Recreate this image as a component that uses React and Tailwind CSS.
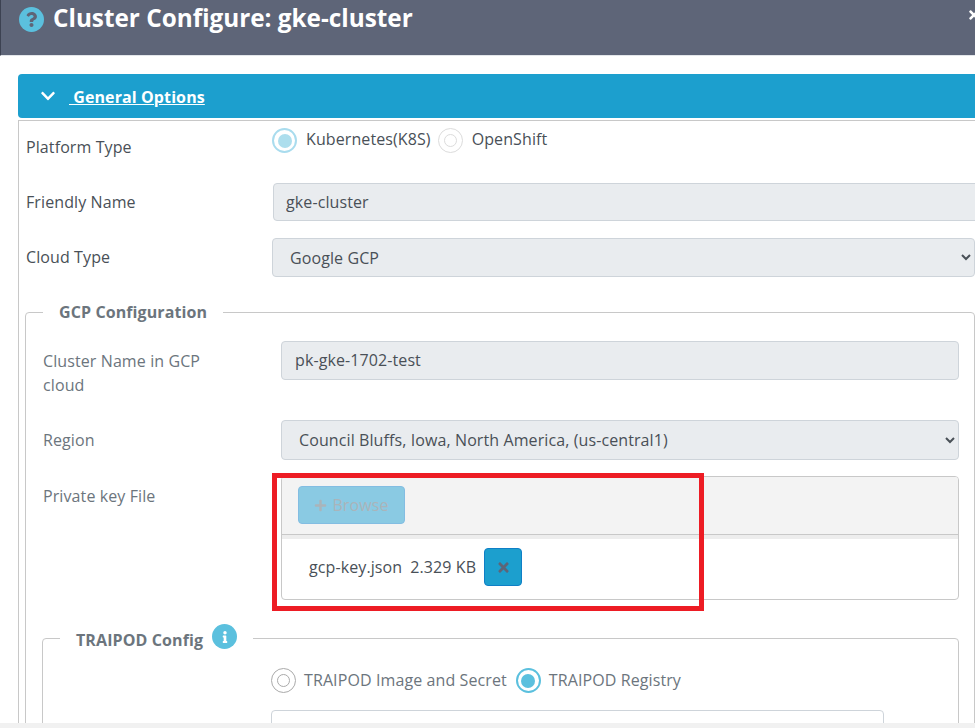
import React from 'react'
import { FaChevronDown, FaInfo, FaPlus, FaQuestion, FaTimes } from 'react-icons/fa'

const Radio = ({ checked, muted }) => {
    const ring = checked
        ? muted ? 'border-[#a9dcee]' : 'border-[#5bc0de]'
        : muted ? 'border-[#dcdcdc]' : 'border-[#aaaaaa]'
    return (
        <span className={`flex h-[25px] w-[25px] shrink-0 items-center justify-center rounded-full bg-white ${checked ? 'border-2 ' + ring : 'border ' + ring}`}>
            {checked ? (
                <span className={`h-[14px] w-[14px] rounded-full ${muted ? 'bg-[#addeed]' : 'bg-[#5bc0de]'}`} />
            ) : (
                <span className={`h-[13px] w-[13px] rounded-full border ${ring}`} />
            )}
        </span>
    )
}

const Row = ({ label, className, labelClass, children }) => (
    <div className={`flex ${className}`}>
        <label className={`shrink-0 text-[16px] leading-[24px] ${labelClass}`}>{label}</label>
        {children}
    </div>
)

const App = () => {
    return (
        <div className="relative h-[728px] w-[975px] overflow-hidden bg-white font-['Open_Sans',sans-serif] text-[16px] tracking-[0.1px] text-[#495057]">
            {/* Header */}
            <div className="relative flex h-[56px] items-start border-l border-b border-l-[#3c4252] border-b-[#e3e6ea] bg-[#5e6578] pl-[18px] pt-[3px]">
                <span className="mt-[4px] flex h-[25px] w-[25px] items-center justify-center rounded-full bg-[#5bc0de] text-[#5e6578]">
                    <FaQuestion size={15} />
                </span>
                <h1 className="ml-[9px] text-[24.3px] font-bold leading-[30px] tracking-normal text-white">Cluster Configure: gke-cluster</h1>
                <FaTimes className="absolute right-[-6px] top-[8px] text-white" size={14} />
            </div>

            <div className="pl-[18px] pt-[18px]">
                {/* General Options */}
                <div className="flex h-[44px] items-center rounded-tl-[4px] rounded-bl-[4px] bg-[#1c9fce] pl-[22px] text-white">
                    <FaChevronDown size={16} />
                    <span className="ml-[13px] mt-[2px] text-[16px] font-bold underline">&nbsp;General Options</span>
                </div>

                <div className="mt-[2px] h-[700px] border-l border-t border-[#c8c8c8] pl-[7px]">
                    <Row label="Platform Type" className="h-[62px] items-start pt-[14px]" labelClass="w-[246px]">
                        <div className="-mt-[7px] flex items-center text-[16px]">
                            <Radio checked muted />
                            <span className="-mt-[4px] ml-[9px]">Kubernetes(K8S)</span>
                            <span className="ml-[7px]"><Radio muted /></span>
                            <span className="-mt-[4px] ml-[9px]">OpenShift</span>
                        </div>
                    </Row>

                    <Row label="Friendly Name" className="h-[38px] items-center" labelClass="w-[247px]">
                        <input
                            disabled
                            value="gke-cluster"
                            className="h-[38px] w-[720px] shrink-0 rounded-[4px] border border-[#ced4da] bg-[#e9ecef] px-[12px] text-[16px] text-[#495057]"
                        />
                    </Row>

                    <Row label="Cloud Type" className="mt-[17px] h-[39px] items-center" labelClass="-mt-[2px] w-[246px]">
                        <select disabled className="h-[39px] w-[703px] shrink-0 rounded-[4px] border border-[#ced4da] bg-[#e9ecef] pl-[13px] text-[16px] text-[#495057] opacity-100">
                            <option>Google GCP</option>
                        </select>
                    </Row>

                    {/* GCP Configuration */}
                    <fieldset className="-ml-px mt-[24px] h-[500px] w-[950px] rounded-[4px] border border-[#c8c8c8] pl-[17px] pr-[14px]">
                        <legend className="px-[16px] text-[16px] font-bold leading-[22px] text-[#6c757d]">GCP Configuration</legend>

                        <Row label={<>Cluster Name in GCP<br />cloud</>} className="mt-[18px] h-[48px] items-start" labelClass="w-[238px] pt-[8px] text-[#6c757d]">
                            <input
                                disabled
                                value="pk-gke-1702-test"
                                className="h-[39px] w-[678px] shrink-0 rounded-[4px] border border-[#ced4da] bg-[#e9ecef] px-[13px] pb-[2px] text-[16px] text-[#495057]"
                            />
                        </Row>

                        <Row label="Region" className="mt-[31px] h-[40px] items-center" labelClass="w-[238px] text-[#6c757d]">
                            <select disabled className="h-[40px] w-[678px] shrink-0 rounded-[4px] border border-[#ced4da] bg-[#e9ecef] pl-[13px] text-[16px] text-[#495057] opacity-100">
                                <option>Council Bluffs, Iowa, North America, (us-central1)</option>
                            </select>
                        </Row>

                        <Row label="Private key File" className="mt-[16px] items-start" labelClass="w-[238px] pt-[8px] text-[#6c757d]">
                            <div className="h-[124px] w-[678px] shrink-0 overflow-hidden rounded-[4px] border border-[#c8c8c8]">
                                <div className="h-[58px] border-b border-[#c8c8c8] bg-[#f3f3f3] pl-[16px] pt-[9px]">
                                    <button className="flex h-[38px] w-[107px] items-center justify-center rounded-[4px] border border-[#83bde2] bg-[#8acae3] text-[16px] text-[#aab4ba]">
                                        <FaPlus size={13} />
                                        <span className="ml-[5px]">Browse</span>
                                    </button>
                                </div>
                                <div className="h-[4px] bg-[#ededed]" />
                                <div className="flex h-[60px] items-start pl-[27px] pt-[9px] text-[#495057]">
                                    <span className="mt-[7px]">gcp-key.json</span>
                                    <span className="ml-[8px] mt-[7px]">2.329 KB</span>
                                    <button className="ml-[8px] flex h-[38px] w-[38px] items-center justify-center rounded-[4px] border border-[#0f7fc6] bg-[#1c9fce] text-[#5e6578]">
                                        <FaTimes size={15} />
                                    </button>
                                </div>
                            </div>
                        </Row>

                        {/* TRAIPOD Config */}
                        <fieldset className="-ml-px mt-[26px] h-[200px] w-[917px] rounded-[4px] border border-[#c8c8c8]">
                            <legend className="ml-[17px] flex items-center px-[16px] text-[16px] font-bold leading-[22px] text-[#6c757d]">
                                <span className="translate-y-[1px]">TRAIPOD Config</span>
                                <span className="ml-[9px] flex h-[25px] w-[25px] -translate-y-[2px] items-center justify-center rounded-full bg-[#5bc0de] text-white">
                                    <FaInfo size={12} />
                                </span>
                            </legend>
                            <div className="ml-[228px] mt-[17px] flex items-center text-[#6c757d]">
                                <Radio />
                                <span className="-mt-[2px] ml-[8px]">TRAIPOD Image and Secret</span>
                                <span className="ml-[9px]"><Radio checked /></span>
                                <span className="-mt-[2px] ml-[8px]">TRAIPOD Registry</span>
                            </div>
                            <div className="ml-[228px] mt-[17px] h-[38px] w-[613px] rounded-[4px] border border-[#ced4da] bg-white" />
                        </fieldset>
                    </fieldset>
                </div>
            </div>

            {/* Annotation over the upload box */}
            <div className="absolute left-[272px] top-[473px] h-[138px] w-[432px] border-[5px] border-[#ed1c24]" />

            {/* Bottom edge */}
            <div className="absolute bottom-0 left-0 h-[5px] w-full bg-[#f1f1f1]" />
        </div>
    )
}

export default App
